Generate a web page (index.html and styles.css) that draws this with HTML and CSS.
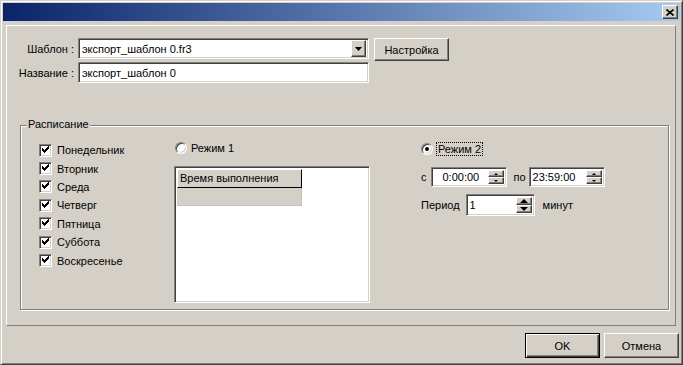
FILE: index.html
```html
<!DOCTYPE html>
<html lang="ru">
<head>
    <meta charset="UTF-8">
    <title>Экспорт</title>
    <link rel="stylesheet" href="styles.css">
</head>
<body>

<div class="window">
    <div class="titlebar">
        <button class="close-btn" type="button">
            <svg width="8" height="7" viewBox="0 0 8 7"><path d="M0.5 0.5 L7.5 6.5 M7.5 0.5 L0.5 6.5" stroke="#000" stroke-width="1.6" fill="none"/></svg>
        </button>
    </div>

    <div class="panel">
        <div class="top-form">
            <label class="field-label">Шаблон :</label>
            <div class="combo">
                <span class="combo-text">экспорт_шаблон 0.fr3</span>
                <span class="combo-arrow">
                    <svg width="7" height="4" viewBox="0 0 7 4"><path d="M0 0 H7 L3.5 4 Z" fill="#000"/></svg>
                </span>
            </div>
            <button class="btn btn-setup" type="button">Настройка</button>

            <label class="field-label">Название :</label>
            <div class="edit edit-name">экспорт_шаблон 0</div>
        </div>

        <div class="group">
            <span class="group-title">Расписание</span>

            <div class="days">
                <div class="check-row"><span class="checkbox"></span>Понедельник</div>
                <div class="check-row"><span class="checkbox"></span>Вторник</div>
                <div class="check-row"><span class="checkbox"></span>Среда</div>
                <div class="check-row"><span class="checkbox"></span>Четверг</div>
                <div class="check-row"><span class="checkbox"></span>Пятница</div>
                <div class="check-row"><span class="checkbox"></span>Суббота</div>
                <div class="check-row"><span class="checkbox"></span>Воскресенье</div>
            </div>

            <div class="mode1">
                <div class="radio-row"><span class="radio"></span>Режим 1</div>
                <div class="listbox">
                    <div class="grid-head">Время выполнения</div>
                    <div class="grid-cell"></div>
                </div>
            </div>

            <div class="mode2">
                <div class="radio-row"><span class="radio checked"></span><span class="focus">Режим 2</span></div>
                <div class="time-row">
                    <span class="from-label">с</span>
                    <div class="spin-edit time-edit">
                        <span class="spin-text centered">0:00:00</span>
                        <span class="spin small"><i class="up"></i><i class="down"></i></span>
                    </div>
                    <span class="to-label">по</span>
                    <div class="spin-edit time-edit">
                        <span class="spin-text">23:59:00</span>
                        <span class="spin small"><i class="up"></i><i class="down"></i></span>
                    </div>
                </div>
                <div class="period-row">
                    <span>Период</span>
                    <div class="spin-edit period-edit">
                        <span class="spin-text">1</span>
                        <span class="spin big"><i class="up"></i><i class="down"></i></span>
                    </div>
                    <span>минут</span>
                </div>
            </div>
        </div>
    </div>

    <div class="footer">
        <button class="btn btn-default" type="button">OK</button>
        <button class="btn" type="button">Отмена</button>
    </div>
</div>

</body>
</html>
```

FILE: styles.css
```css
* {
    margin: 0;
    padding: 0;
    box-sizing: border-box;
}
body {
    font-family: 'Liberation Sans', Arial, sans-serif;
    font-size: 11px;
    color: #000;
    background-color: #d4d0c8;
}
.window {
    width: 683px;
    height: 365px;
    padding: 2px;
    background-color: #d4d0c8;
    border: 1px solid;
    border-color: #d4d0c8 #404040 #404040 #d4d0c8;
    box-shadow: inset 1px 1px #fff, inset -1px -1px #808080;
}
.titlebar {
    height: 18px;
    display: flex;
    justify-content: flex-end;
    align-items: flex-start;
    padding: 2px 2px 0 0;
    background: linear-gradient(to right, #0a246a, #a6caf0);
}
.close-btn {
    width: 16px;
    height: 14px;
    display: flex;
    align-items: center;
    justify-content: center;
    background-color: #d4d0c8;
    border: 1px solid;
    border-color: #fff #404040 #404040 #fff;
    box-shadow: inset -1px -1px #808080;
}

/* main panel */
.panel {
    width: 670px;
    height: 301px;
    margin: 4px 0 0 3px;
    border: 1px solid;
    border-color: #fff #808080 #808080 #fff;
    padding: 12px 0 0 0;
}
.top-form {
    display: grid;
    grid-template-columns: 71px 291px 80px;
    grid-template-rows: 21px 21px;
    row-gap: 3px;
    align-items: center;
}
.field-label {
    text-align: right;
    padding-right: 4px;
}
.combo, .edit, .spin-edit, .listbox {
    background-color: #fff;
    border: 1px solid;
    border-color: #808080 #fff #fff #808080;
    box-shadow: inset 1px 1px #404040, inset -1px -1px #d4d0c8;
}
.combo {
    height: 21px;
    display: flex;
    align-items: center;
    justify-content: space-between;
    padding: 2px;
}
.combo-text {
    padding-left: 1px;
}
.combo-arrow {
    width: 15px;
    height: 17px;
    display: flex;
    align-items: center;
    justify-content: center;
    background-color: #d4d0c8;
    border: 1px solid;
    border-color: #fff #404040 #404040 #fff;
    box-shadow: inset -1px -1px #808080;
}
.edit {
    height: 21px;
    display: flex;
    align-items: center;
    padding: 0 3px;
}
.btn {
    width: 75px;
    height: 25px;
    font-family: inherit;
    font-size: 11px;
    color: #000;
    background-color: #d4d0c8;
    border: 1px solid;
    border-color: #fff #404040 #404040 #fff;
    box-shadow: inset -1px -1px #808080;
}
.btn-setup {
    height: 23px;
    margin-left: 5px;
    align-self: start;
}

/* group box */
.group {
    position: relative;
    width: 649px;
    height: 185px;
    margin: 42px 0 0 13px;
    border: 1px solid #808080;
    box-shadow: inset 1px 1px #fff, 1px 1px #fff;
    display: flex;
    align-items: flex-start;
    padding: 15px 0 0 18px;
}
.group-title {
    position: absolute;
    top: -8px;
    left: 6px;
    padding: 0 1px;
    background-color: #d4d0c8;
}
.days {
    width: 135px;
    display: grid;
    grid-auto-rows: 18.4px;
}
.check-row {
    display: flex;
    align-items: center;
    gap: 5px;
}
.checkbox {
    width: 13px;
    height: 13px;
    background-color: #fff;
    border: 1px solid;
    border-color: #808080 #fff #fff #808080;
    box-shadow: inset 1px 1px #404040, inset -1px -1px #d4d0c8;
    position: relative;
}
.checkbox::after {
    content: "";
    position: absolute;
    left: 2px;
    top: 1px;
    width: 7px;
    height: 7px;
    background: url("data:image/svg+xml,%3Csvg xmlns='http://www.w3.org/2000/svg' width='7' height='7'%3E%3Cpath d='M0 2h1v1h1v1h1v-1h1v-1h1v-1h1v-1h1v3h-1v1h-1v1h-1v1h-1v1h-1v-1h-1v-1h-1z' fill='%23000'/%3E%3C/svg%3E") no-repeat;
}

/* mode 1 */
.mode1 {
    width: 196px;
    display: flex;
    flex-direction: column;
}
.radio-row {
    height: 13px;
    display: flex;
    align-items: center;
    gap: 4px;
    padding-left: 1px;
}
.radio {
    width: 12px;
    height: 12px;
    border-radius: 50%;
    background-color: #fff;
    border: 1px solid;
    border-color: #808080 #fff #fff #808080;
    box-shadow: inset 1px 1px #404040, inset -1px -1px #d4d0c8;
    position: relative;
}
.radio.checked::after {
    content: "";
    position: absolute;
    left: 3px;
    top: 3px;
    width: 4px;
    height: 4px;
    border-radius: 50%;
    background-color: #000;
}
.listbox {
    height: 137px;
    margin-top: 12px;
    padding: 2px;
}
.grid-head {
    width: 125px;
    height: 19px;
    line-height: 17px;
    padding-left: 2px;
    background-color: #d4d0c8;
    border: 1px solid;
    border-color: #fff #000 #000 #fff;
}
.grid-cell {
    width: 125px;
    height: 18px;
    background-color: #d4d0c8;
    border-right: 1px solid #c0c0c0;
    border-bottom: 1px solid #c0c0c0;
}

/* mode 2 */
.mode2 {
    margin-left: 50px;
    display: flex;
    flex-direction: column;
}
.mode2 .radio-row {
    margin-top: 1px;
}
.focus {
    outline: 1px dotted #000;
    outline-offset: 0;
    padding: 0 1px;
}
.time-row, .period-row {
    display: flex;
    align-items: center;
    padding-left: 1px;
}
.time-row {
    margin-top: 12px;
}
.time-row .from-label {
    margin-right: 4px;
}
.time-row .to-label {
    margin: 0 3px 0 7px;
}
.period-row {
    margin-top: 7px;
    gap: 6px;
}
.spin-edit {
    display: flex;
    align-items: center;
    justify-content: space-between;
    padding: 2px;
}
.time-edit {
    width: 76px;
    height: 20px;
}
.period-edit {
    width: 69px;
    height: 22px;
    margin-right: 2px;
}
.spin-text {
    padding-left: 1px;
}
.spin-text.centered {
    padding-left: 9px;
}
.spin {
    display: flex;
    flex-direction: column;
    width: 16px;
    height: 100%;
}
.spin i {
    flex: 1;
    position: relative;
    background-color: #d4d0c8;
    border: 1px solid;
    border-color: #fff #404040 #404040 #fff;
    box-shadow: inset -1px -1px #808080;
}
.spin i::after {
    content: "";
    position: absolute;
    left: 50%;
    top: 50%;
    border-left: 2px solid transparent;
    border-right: 2px solid transparent;
    transform: translate(-50%, -50%);
}
.spin.small i.up::after {
    border-bottom: 2px solid #000;
}
.spin.small i.down::after {
    border-top: 2px solid #000;
}
.spin.big i::after {
    border-left-width: 4px;
    border-right-width: 4px;
}
.spin.big i.up::after {
    border-bottom: 4px solid #000;
}
.spin.big i.down::after {
    border-top: 4px solid #000;
}

/* footer buttons */
.footer {
    display: flex;
    justify-content: flex-end;
    gap: 4px;
    margin: 7px 1px 0 0;
}
.btn-default {
    border-color: #000;
    box-shadow: inset 1px 1px #fff, inset -1px -1px #404040, inset -2px -2px #808080;
}
```
